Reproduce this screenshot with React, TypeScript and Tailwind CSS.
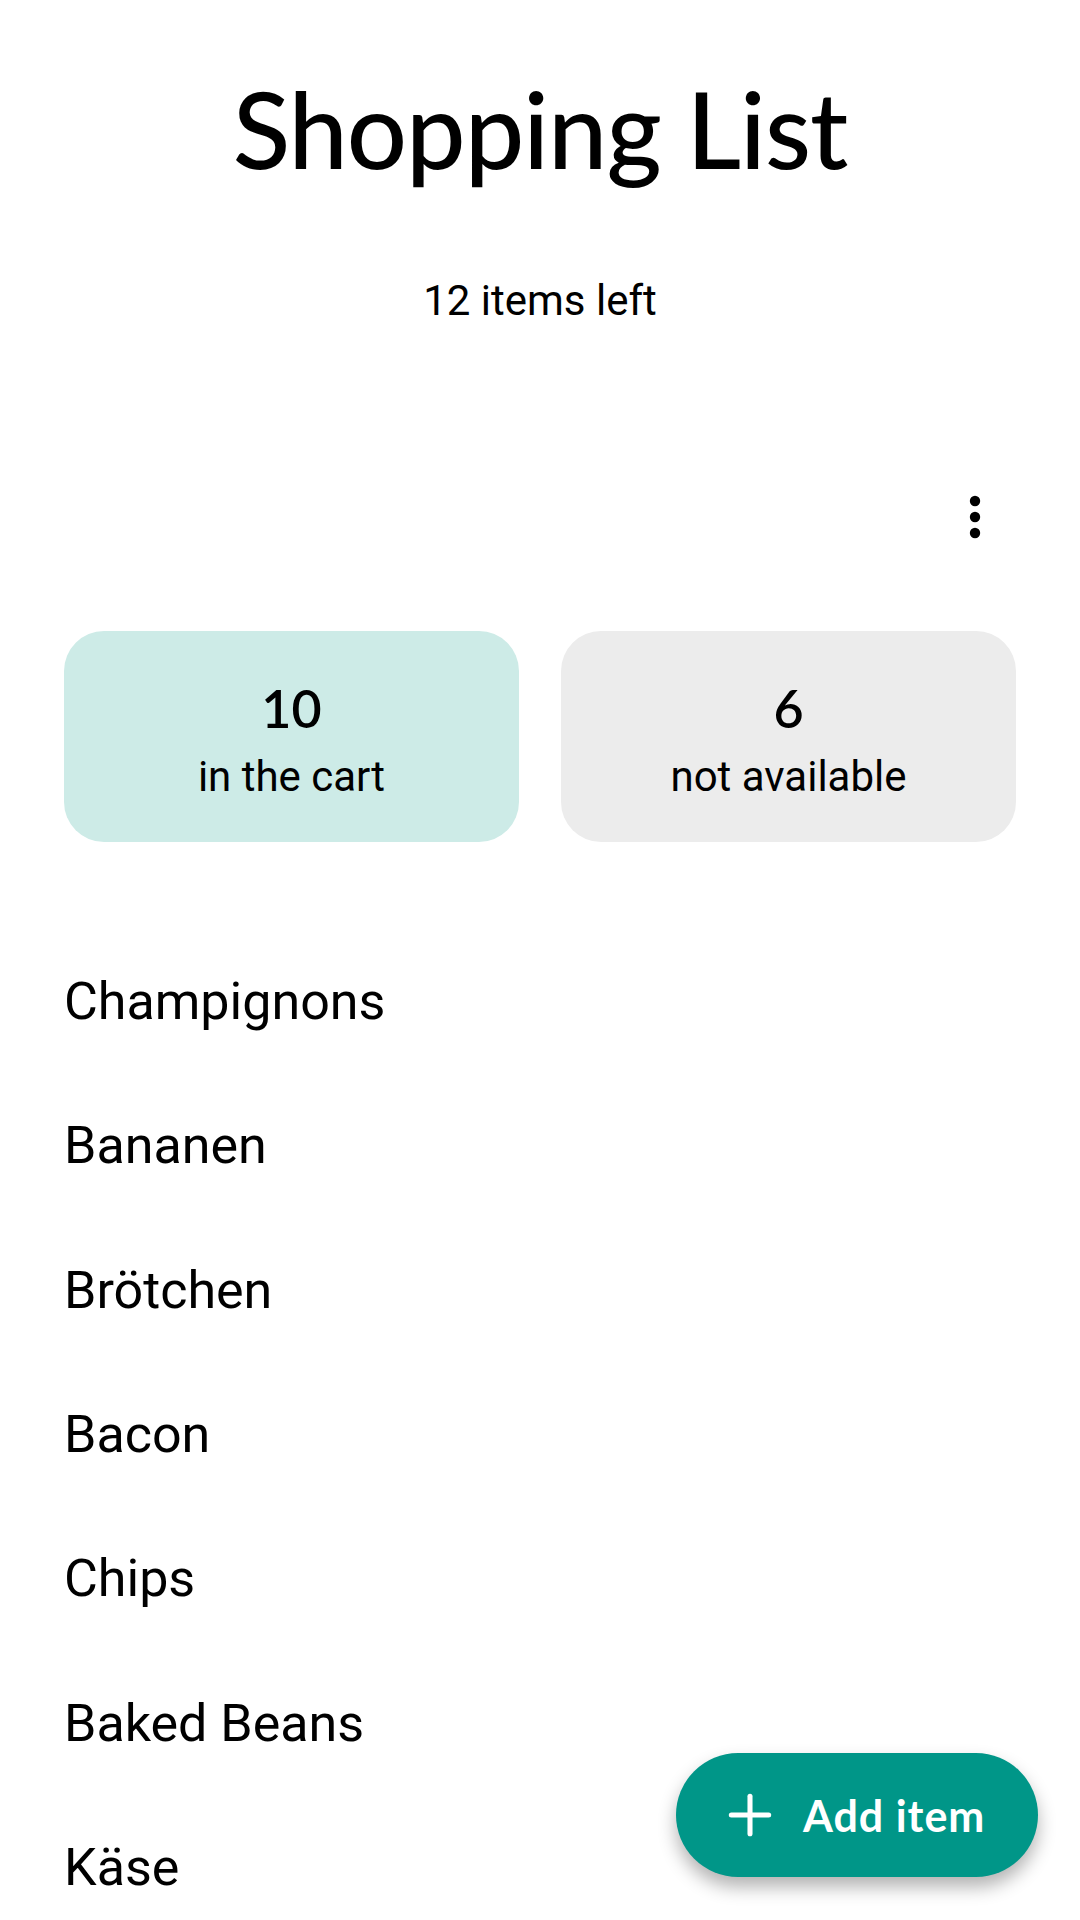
import { Plus } from "lucide-react";

const items = ["Champignons", "Bananen", "Brötchen", "Bacon", "Chips", "Baked Beans", "Käse"];

function StatCard({ count, label, tone }: { count: number; label: string; tone: string }) {
  return (
    <div className={`flex flex-col items-center rounded-[40px] h-[211px] ${tone}`}>
      <p className="mt-[51px] font-['Lato',sans-serif] text-[52px] leading-none font-semibold text-black">{count}</p>
      <p className="mt-[22px] font-['Roboto',sans-serif] text-[42px] leading-none text-black">{label}</p>
    </div>
  );
}

export default function App() {
  return (
    <div className="relative w-[1080px] h-[1920px] overflow-hidden bg-white text-black">
      <h1 className="pt-[75px] text-center font-['Lato',sans-serif] text-[106px] leading-none font-medium tracking-[-1px]">
        Shopping List
      </h1>
      <p className="mt-[99px] text-center font-['Roboto',sans-serif] text-[42px] leading-none">12 items left</p>

      <div className="mt-[172px] flex justify-end pr-[87px]">
        <button className="w-[36px] h-[48px] flex items-center justify-center">
          <svg width="12" height="46" viewBox="0 0 12 46">
            <circle cx="6" cy="6" r="5.2" fill="black" />
            <circle cx="6" cy="22" r="5.2" fill="black" />
            <circle cx="6" cy="38" r="5.2" fill="black" />
          </svg>
        </button>
      </div>

      <div className="mt-[89px] grid grid-cols-2 gap-[42px] px-[64px]">
        <StatCard count={10} label="in the cart" tone="bg-[#cdebe7]" />
        <StatCard count={6} label="not available" tone="bg-[#ececec]" />
      </div>

      <ul className="mt-[88px] px-[64px]">
        {items.map((name) => (
          <li key={name} className="h-[144.33px] flex items-center font-['Roboto',sans-serif] text-[52px] leading-none">
            {name}
          </li>
        ))}
      </ul>

      <button className="absolute right-[42px] bottom-[43px] w-[362px] h-[124px] rounded-full bg-[#009688] flex items-center pl-[42px] gap-[21px] text-white shadow-[0_10px_18px_rgba(0,0,0,0.3)]">
        <Plus size={64} strokeWidth={1.9} />
        <span className="font-['Lato',sans-serif] text-[43px] leading-none font-bold tracking-[1px]">Add item</span>
      </button>
    </div>
  );
}
